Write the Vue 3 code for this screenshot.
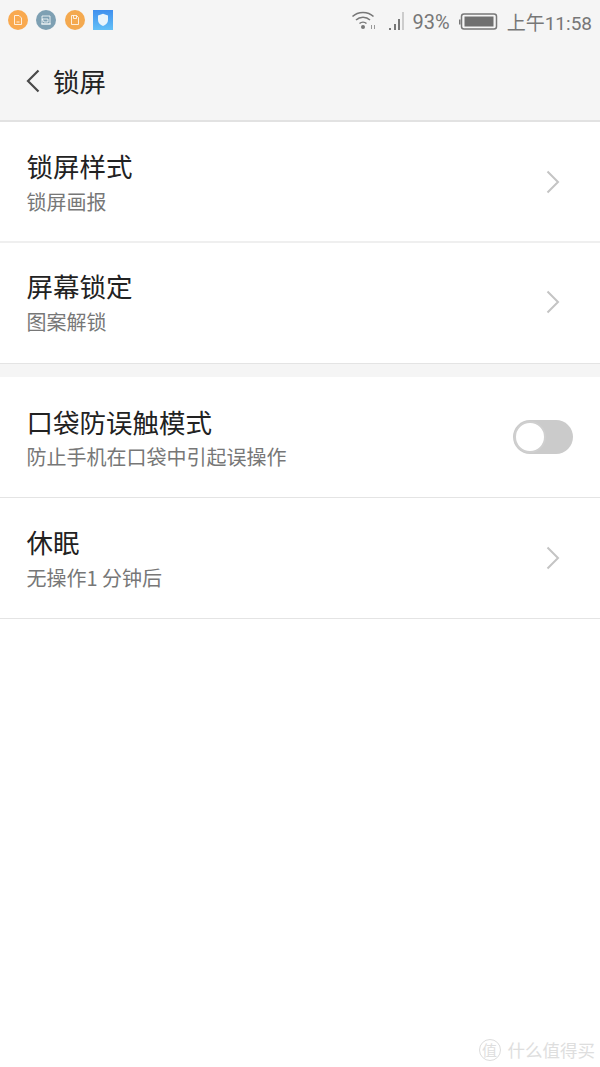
<script setup>
const groupA = [
  { title: '锁屏样式', sub: '锁屏画报' },
  { title: '屏幕锁定', sub: '图案解锁' },
]
const groupB = [
  { title: '口袋防误触模式', sub: '防止手机在口袋中引起误操作', toggle: true },
  { title: '休眠', sub: '无操作1 分钟后' },
]
</script>

<template>
  <div class="screen">
    <header class="top">
      <div class="status">
        <div class="notif">
          <span class="dot orange"><svg width="10" height="12" viewBox="0 0 10 12"><path d="M1.500 1.500h4.500l2.500 2.500v6.500h-7z" fill="none" stroke="#fff" stroke-opacity=".8" stroke-width="1"/><path d="M3.500 8h3" stroke="#fff" stroke-opacity=".8"/></svg></span>
          <span class="dot slate"><svg width="12" height="12" viewBox="0 0 12 12"><path d="M2 2h8v8H2z M2 5h6v3H4z M1 10h10" fill="none" stroke="#fff" stroke-opacity=".8" stroke-width="1"/></svg></span>
          <span class="dot orange2"><svg width="10" height="12" viewBox="0 0 10 12"><path d="M1.500 1.500h5l2 2v7h-7z M3.500 1.500v3h3v-3" fill="none" stroke="#fff" stroke-opacity=".8" stroke-width="1"/></svg></span>
          <span class="shield"><svg width="12" height="14" viewBox="0 0 12 14"><path d="M6 .8l5 1.800v4.400c0 3-2.300 5-5 6-2.700-1-5-3-5-6V2.600z" fill="#eaf4fb"/></svg></span>
        </div>
        <div class="sys">
          <svg class="wifi" width="26" height="20" viewBox="0 0 26 20"><g fill="none" stroke="#777" stroke-width="1.500"><path d="M1.500 6.500C7 1 17 1 22.500 6.500"/><path d="M5 10c3.800-3.700 10.200-3.700 14 0"/><path d="M8.500 13.500c2-1.800 5-1.800 7 0"/></g><circle cx="12" cy="17" r="2" fill="#777"/><path d="M20 15v4h1v-4zM23 15v4h1v-4z" fill="#999"/></svg>
          <svg class="signal" width="17" height="20" viewBox="0 0 17 20"><path d="M1 17h2v2H1zM6 13h2v6H6zM10 8h2v11h-2z" fill="#777"/><path d="M14 1h2v18h-2z" fill="#ccc"/></svg>
          <span class="pct">93%</span>
          <svg class="batt" width="40" height="18" viewBox="0 0 40 18"><path d="M1 6.500h1.500v5H1z" fill="#777"/><rect x="3.500" y="1" width="35" height="15" rx="2.500" fill="none" stroke="#777" stroke-width="1.500"/><rect x="6.500" y="3.500" width="29" height="10" fill="#707070"/></svg>
          <span class="time">上午11:58</span>
        </div>
      </div>
      <div class="bar">
        <svg class="back" width="14" height="24" viewBox="0 0 14 24"><path d="M12.500 1.500L2 12l10.500 10.500" fill="none" stroke="#4a4a4a" stroke-width="2.200"/></svg>
        <span class="heading">锁屏</span>
      </div>
    </header>

    <section class="group first">
      <div v-for="item in groupA" :key="item.title" class="row">
        <div class="text">
          <div class="title">{{ item.title }}</div>
          <div class="sub">{{ item.sub }}</div>
        </div>
        <svg class="chev" width="14" height="24" viewBox="0 0 14 24"><path d="M1.500 1.500L12 12 1.500 22.500" fill="none" stroke="#c4c4c4" stroke-width="2"/></svg>
      </div>
    </section>

    <section class="group second">
      <div v-for="item in groupB" :key="item.title" class="row">
        <div class="text">
          <div class="title">{{ item.title }}</div>
          <div class="sub">{{ item.sub }}</div>
        </div>
        <div v-if="item.toggle" class="toggle"><span class="knob"></span></div>
        <svg v-else class="chev" width="14" height="24" viewBox="0 0 14 24"><path d="M1.500 1.500L12 12 1.500 22.500" fill="none" stroke="#c4c4c4" stroke-width="2"/></svg>
      </div>
    </section>

    <div class="mark">
      <span class="seal">值</span>
      <span class="mark-text">什么值得买</span>
    </div>
  </div>
</template>

<style>
html, body { margin: 0; background: #fff; }
</style>

<style scoped>
.screen {
  position: relative;
  width: 600px;
  height: 1067px;
  overflow: hidden;
  background: #fff;
  font-family: "Noto Sans CJK SC", "Noto Sans", sans-serif;
}
.top {
  height: 120px;
  background: #f5f5f5;
  border-bottom: 2px solid #e2e2e2;
  box-sizing: content-box;
}
.status {
  height: 42px;
  display: flex;
  justify-content: space-between;
  align-items: center;
  padding: 0 8px;
}
.notif { display: flex; align-items: center; gap: 8.300px; margin-top: -2px; }
.dot {
  width: 20px;
  height: 20px;
  border-radius: 50%;
  display: flex;
  align-items: center;
  justify-content: center;
}
.orange { background: #f9a94f; }
.slate { background: #7ea0b3; }
.orange2 { background: #f4a94f; }
.shield {
  width: 20px;
  height: 20px;
  background: linear-gradient(#3f8fee, #63c0f7);
  display: flex;
  align-items: center;
  justify-content: center;
}
.sys { display: flex; align-items: center; color: #777; margin-top: 1px; }
.wifi { margin-right: 11px; margin-top: -4px; }
.signal { margin-right: 8px; margin-top: -2px; }
.pct { font-family: Roboto, sans-serif; font-size: 20px; margin-right: 8px; }
.batt { margin-right: 9px; }
.time { font-size: 19px; font-family: Roboto, "Noto Sans CJK SC", sans-serif; }
.bar {
  height: 78px;
  display: flex;
  align-items: center;
  padding-left: 26px;
}
.back { margin-right: 13px; }
.heading { font-size: 26.500px; color: #222; line-height: 1; }

.row {
  height: 120px;
  box-sizing: content-box;
  border-bottom: 1px solid #e4e4e4;
  display: flex;
  align-items: center;
  justify-content: space-between;
  padding: 0 27px 0 26.500px;
}
.first .row:first-child { height: 119px; border-bottom: 2px solid #efefef; }
.first { border-bottom: 13px solid #f5f5f5; }
.text { display: flex; flex-direction: column; padding-top: 2px; }
.first .row:last-child .text { margin-top: -2px; }
.first .row:last-child .chev { margin-top: -2px; }
.second .row:first-child .title { position: relative; top: 1px; }
.title { font-size: 26.500px; line-height: 36px; color: #222; }
.sub { font-size: 20px; line-height: 32px; margin-top: 2px; color: #777; font-family: "Noto Sans CJK SC", sans-serif; }
.chev { margin-right: 13px; }
.toggle {
  position: relative;
  width: 60px;
  height: 34px;
  border-radius: 17px;
  background: #cbcbcb;
}
.knob {
  position: absolute;
  left: 1px;
  top: 1px;
  width: 28px;
  height: 28px;
  border: 2px solid #cfcfcf;
  border-radius: 50%;
  background: #fff;
}
.mark {
  position: absolute;
  right: 5px;
  bottom: 5px;
  display: flex;
  align-items: center;
  gap: 7px;
  color: #dedede;
}
.seal {
  width: 20px;
  height: 20px;
  border: 1.500px solid #dcdcdc;
  border-radius: 50%;
  font-size: 15px;
  line-height: 20px;
  text-align: center;
}
.mark-text { font-size: 17.500px; }
</style>
